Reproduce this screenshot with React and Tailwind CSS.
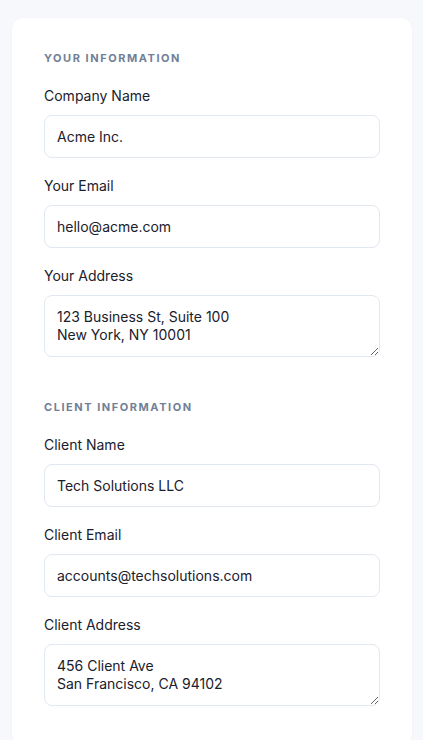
const Field = ({ label, value, textarea }) => (
  <div className="flex flex-col">
    <label className="text-[14px] leading-5 text-[#1a202c] mb-[9px]">{label}</label>
    {textarea ? (
      <textarea
        defaultValue={value}
        className="h-[62px] w-full rounded-lg border border-[#e2e8f0] bg-white px-3 pt-3 pb-2 text-[14px] leading-[18px] text-[#1a202c] outline-none"
      />
    ) : (
      <input
        type="text"
        defaultValue={value}
        className="h-[43px] w-full rounded-lg border border-[#e2e8f0] bg-white px-3 text-[14px] text-[#1a202c] outline-none"
      />
    )}
  </div>
);

const Section = ({ title, children }) => (
  <section className="flex flex-col">
    <h3 className="text-[11px] leading-4 font-bold tracking-[0.14em] uppercase text-[#718096] mb-5">{title}</h3>
    <div className="flex flex-col gap-[18px]">{children}</div>
  </section>
);

export default function App() {
  return (
    <div className="min-h-screen bg-[#f7f8fc] pt-[18px] pl-3 font-['Inter',sans-serif]">
      <div className="w-[400px] bg-white rounded-xl shadow-[0_1px_3px_rgba(15,23,42,0.04)] px-8 pt-8 pb-10 flex flex-col gap-[42px]">
        <Section title="Your Information">
          <Field label="Company Name" value="Acme Inc." />
          <Field label="Your Email" value="hello@acme.com" />
          <Field label="Your Address" value={"123 Business St, Suite 100\nNew York, NY 10001"} textarea />
        </Section>
        <Section title="Client Information">
          <Field label="Client Name" value="Tech Solutions LLC" />
          <Field label="Client Email" value="accounts@techsolutions.com" />
          <Field label="Client Address" value={"456 Client Ave\nSan Francisco, CA 94102"} textarea />
        </Section>
      </div>
    </div>
  );
}
